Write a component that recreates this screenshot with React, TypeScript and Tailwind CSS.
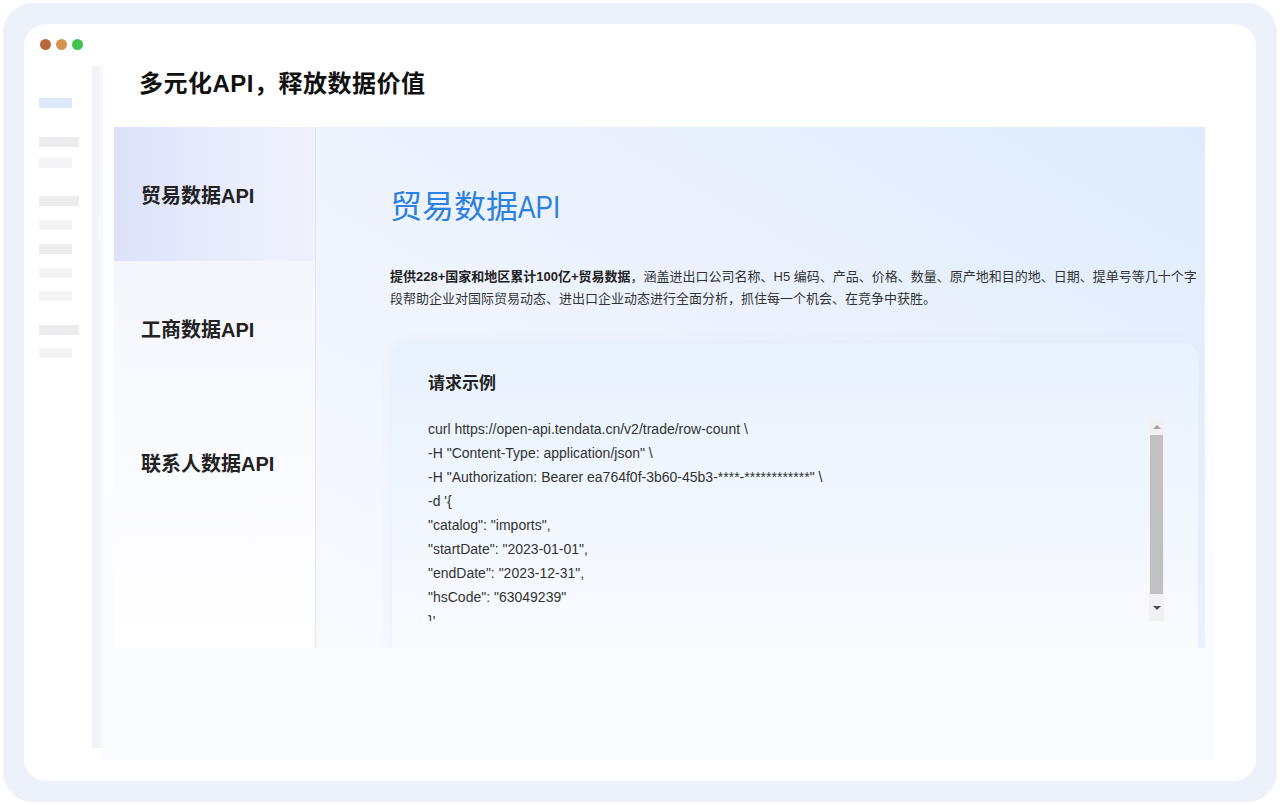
import React from 'react';

const FONT = { fontFamily: '"Liberation Sans", "Noto Sans CJK SC", sans-serif' };

const tabs = ['贸易数据API', '工商数据API', '联系人数据API'];

const codeLines = [
  'curl https://open-api.tendata.cn/v2/trade/row-count \\',
  '-H "Content-Type: application/json" \\',
  '-H "Authorization: Bearer ea764f0f-3b60-45b3-****-************" \\',
  "-d '{",
  '"catalog": "imports",',
  '"startDate": "2023-01-01",',
  '"endDate": "2023-12-31",',
  '"hsCode": "63049239"',
  "}'",
];

// 左侧骨架条
const skeleton: { w: string; c: string; mt: string }[] = [
  { w: 'w-[33px]', c: 'bg-[#dde9fb]', mt: 'mt-0' },
  { w: 'w-[40px]', c: 'bg-[#ececef]', mt: 'mt-[29px]' },
  { w: 'w-[33px]', c: 'bg-[#f4f4f6]', mt: 'mt-[11px]' },
  { w: 'w-[40px]', c: 'bg-[#ececef]', mt: 'mt-[28px]' },
  { w: 'w-[33px]', c: 'bg-[#f4f4f6]', mt: 'mt-[14px]' },
  { w: 'w-[33px]', c: 'bg-[#ececef]', mt: 'mt-[14px]' },
  { w: 'w-[33px]', c: 'bg-[#f4f4f6]', mt: 'mt-[14px]' },
  { w: 'w-[33px]', c: 'bg-[#f4f4f6]', mt: 'mt-[13px]' },
  { w: 'w-[40px]', c: 'bg-[#ececef]', mt: 'mt-[24px]' },
  { w: 'w-[33px]', c: 'bg-[#f4f4f6]', mt: 'mt-[13px]' },
];

function Scrollbar() {
  return (
    <div className="w-[15px] shrink-0 bg-[#f1f1f1] flex flex-col items-center">
      <div className="h-[16px] flex items-center justify-center">
        <div className="w-0 h-0 border-l-[4px] border-r-[4px] border-b-[4px] border-l-transparent border-r-transparent border-b-[#a3a3a3]" />
      </div>
      <div className="w-[13px] h-[159px] bg-[#c1c1c1]" />
      <div className="flex-1 flex items-center justify-center">
        <div className="w-0 h-0 border-l-[4px] border-r-[4px] border-t-[4px] border-l-transparent border-r-transparent border-t-[#505050]" />
      </div>
    </div>
  );
}

export default function App() {
  return (
    <div className="w-[1280px] h-[805px] bg-white p-[3px]" style={FONT}>
      <div className="w-full h-full rounded-[30px] bg-[#edf1fa] p-[21px]">
        <div className="w-full h-full rounded-[22px] bg-white relative flex">
          {/* 窗口按钮 */}
          <div className="absolute left-[16px] top-[15px] flex gap-[5px]">
            <div className="w-[11px] h-[11px] rounded-full bg-[#b9693c]" />
            <div className="w-[11px] h-[11px] rounded-full bg-[#d4924b]" />
            <div className="w-[11px] h-[11px] rounded-full bg-[#3fc54f]" />
          </div>

          {/* 侧边骨架 */}
          <div className="w-[68px] shrink-0 pt-[74px] pl-[15px] flex flex-col">
            {skeleton.map((s, i) => (
              <div key={i} className={`h-[10px] ${s.w} ${s.c} ${s.mt}`} />
            ))}
          </div>
          <div className="w-[11px] shrink-0 mt-[42px] mb-[33px] bg-gradient-to-r from-[#f0f1f5] to-[#f7f8fb]" />

          {/* 主体 */}
          <div className="w-[1112px] mt-[42px] mb-[21px] bg-gradient-to-b from-white to-[#f9fbfe] flex flex-col">
            <h1 className="pl-[36px] h-[61px] text-[24px] font-bold text-[#111] leading-[36px] tracking-[0.5px]">
              多元化API，释放数据价值
            </h1>

            <div className="ml-[11px] w-[1091px] h-[521px] flex bg-gradient-to-b from-[#eaf1fd] via-[#f4f8fe] to-white overflow-hidden">
              {/* 标签列 */}
              <div className="w-[202px] shrink-0 border-r border-[#e3e6ee] flex flex-col bg-gradient-to-b from-[#f1f3fc] to-white">
                {tabs.map((t, i) => (
                  <div
                    key={t}
                    className={`h-[134px] pl-[27px] pt-[54px] text-[20px] font-bold text-[#222] ${
                      i === 0 ? 'bg-gradient-to-r from-[#dde2fa] via-[#e8ebfb] to-[#eff2fc]' : ''
                    }`}
                  >
                    {t}
                  </div>
                ))}
              </div>

              {/* 内容 */}
              <div className="flex-1 pl-[74px] pr-[6px] pt-[60px] bg-gradient-to-bl from-[#dfebfc] via-[#edf3fd] to-[#f8fafe]">
                <h2 className="text-[32px] text-[#2b80e2] leading-[40px] flex items-center">
                  贸易数据
                  <span className="inline-block w-[39px] scale-x-[0.82] origin-left">API</span>
                </h2>
                <p className="mt-[39px] w-[810px] text-[13px] leading-[22px] text-[#333]">
                  <b className="font-bold text-[#222]">提供228+国家和地区累计100亿+贸易数据</b>
                  ，涵盖进出口公司名称、H5 编码、产品、价格、数量、原产地和目的地、日期、提单号等几十个字段帮助企业对国际贸易动态、进出口企业动态进行全面分析，抓住每一个机会、在竞争中获胜。
                </p>

                <div className="mt-[33px] ml-[2px] w-[806px] h-[320px] rounded-[14px] bg-gradient-to-b from-[#e8f2fd] via-[#f1f7fe] to-[#f9fbfe] pl-[36px] pr-[34px] pt-[29px] shadow-[0_0_12px_rgba(220,230,245,0.6)]">
                  <div className="text-[17px] font-bold text-[#222] leading-[24px]">请求示例</div>
                  <div className="mt-[23px] h-[202px] flex">
                    <div className="flex-1 overflow-hidden -mt-[2px]">
                      {codeLines.map((l, i) => (
                        <div key={i} className="text-[14px] leading-[24px] text-[#333] whitespace-pre">
                          {l}
                        </div>
                      ))}
                    </div>
                    <Scrollbar />
                  </div>
                </div>
              </div>
            </div>
          </div>
        </div>
      </div>
    </div>
  );
}
